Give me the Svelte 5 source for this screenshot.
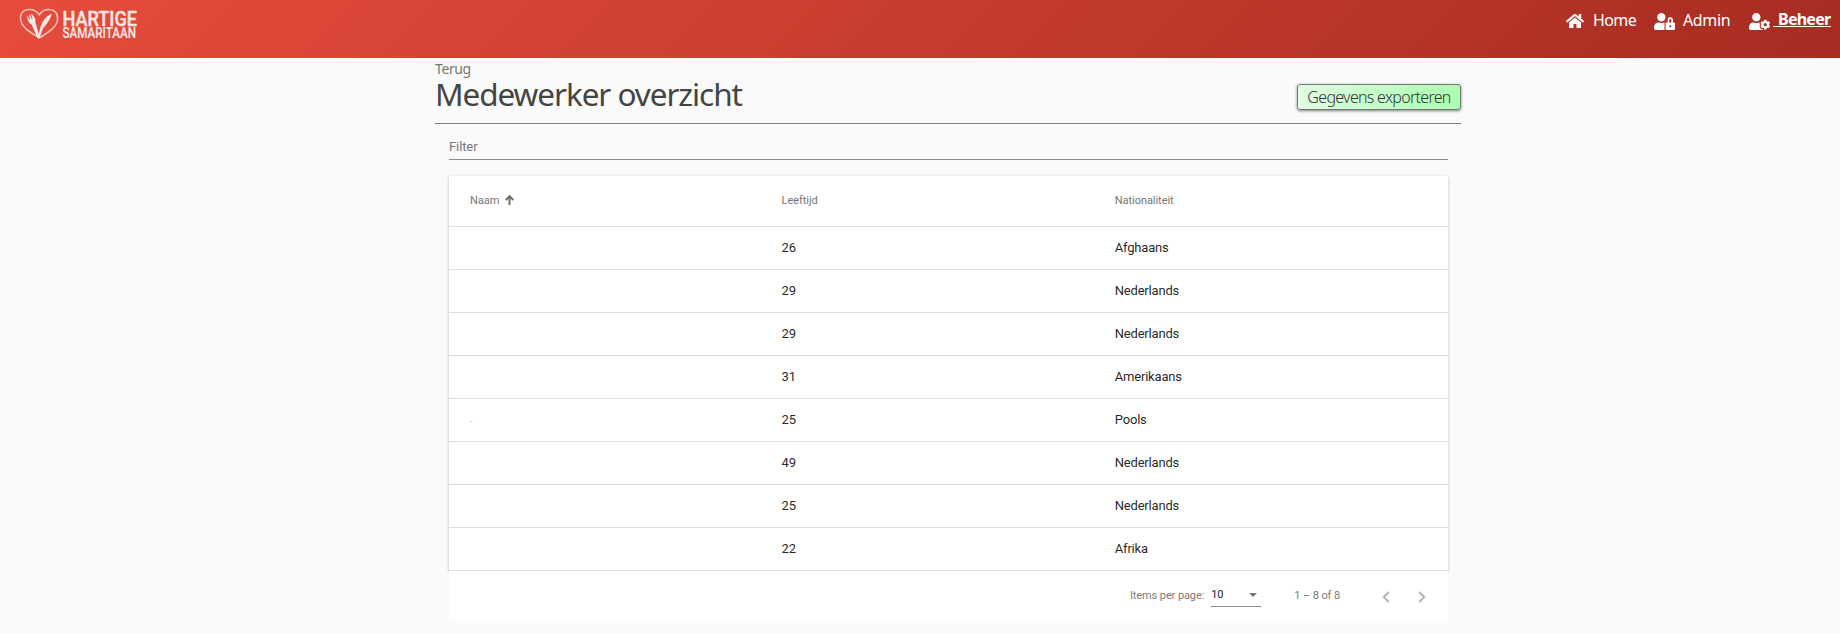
<script>
  const nav = [
    { label: 'Home', cls: 'home', box: '0 0 576 512', w: 18,
      d: 'M280.37 148.26L96 300.11V464a16 16 0 0 0 16 16l112.06-.29a16 16 0 0 0 15.92-16V368a16 16 0 0 1 16-16h64a16 16 0 0 1 16 16v95.64a16 16 0 0 0 16 16.05L464 480a16 16 0 0 0 16-16V300L295.67 148.26a12.19 12.19 0 0 0-15.3 0zM571.6 251.47L488 182.56V44.05a12 12 0 0 0-12-12h-56a12 12 0 0 0-12 12v72.61L318.47 43a48 48 0 0 0-61 0L4.34 251.47a12 12 0 0 0-1.6 16.9l25.5 31A12 12 0 0 0 45.15 301l235.22-193.74a12.19 12.19 0 0 1 15.3 0L530.9 301a12 12 0 0 0 16.9-1.6l25.5-31a12 12 0 0 0-1.7-16.93z' },
    { label: 'Admin', cls: 'admin', box: '0 0 640 512', w: 20,
      d: 'M224 256A128 128 0 1 0 96 128a128 128 0 0 0 128 128zm96 64a63.08 63.08 0 0 1 8.1-30.5c-4.8-.5-9.5-1.5-14.5-1.5h-16.7a174.08 174.08 0 0 1-145.8 0h-16.7A134.43 134.43 0 0 0 0 422.4V464a48 48 0 0 0 48 48h280.9a63.54 63.54 0 0 1-8.9-32zm288-32h-32v-80a80 80 0 0 0-160 0v80h-32a32 32 0 0 0-32 32v160a32 32 0 0 0 32 32h224a32 32 0 0 0 32-32V320a32 32 0 0 0-32-32zM496 432a32 32 0 1 1 32-32 32 32 0 0 1-32 32zm32-144h-64v-80a32 32 0 0 1 64 0z' },
    { label: 'Beheer', cls: 'beheer', box: '0 0 640 512', w: 20,
      d: 'M610.5 373.3c2.6-14.1 2.6-28.5 0-42.6l25.8-14.9c3-1.7 4.3-5.2 3.3-8.5-6.7-21.6-18.2-41.2-33.2-57.4-2.3-2.5-6-3.1-9-1.4l-25.8 14.9c-10.9-9.3-23.4-16.5-36.9-21.3v-29.8c0-3.4-2.4-6.4-5.7-7.1-22.3-5-45-4.8-66.2 0-3.3.7-5.7 3.7-5.7 7.1v29.8c-13.5 4.8-26 12-36.9 21.3l-25.8-14.9c-2.9-1.7-6.7-1.1-9 1.4-15 16.2-26.5 35.8-33.2 57.4-1 3.3.4 6.8 3.3 8.5l25.8 14.9c-2.6 14.1-2.6 28.5 0 42.6l-25.8 14.9c-3 1.7-4.3 5.2-3.3 8.5 6.7 21.6 18.2 41.1 33.2 57.4 2.3 2.5 6 3.1 9 1.4l25.8-14.9c10.9 9.3 23.4 16.5 36.9 21.3v29.8c0 3.4 2.4 6.4 5.7 7.1 22.3 5 45 4.8 66.2 0 3.3-.7 5.7-3.7 5.7-7.1v-29.8c13.5-4.8 26-12 36.9-21.3l25.8 14.9c2.9 1.7 6.7 1.1 9-1.4 15-16.2 26.5-35.8 33.2-57.4 1-3.3-.4-6.8-3.3-8.5l-25.8-14.9zM496 400.5c-26.8 0-48.5-21.8-48.5-48.5s21.8-48.5 48.5-48.5 48.5 21.8 48.5 48.5-21.7 48.5-48.5 48.5zM224 256c70.7 0 128-57.3 128-128S294.7 0 224 0 96 57.3 96 128s57.3 128 128 128zm201.2 226.5c-2.3-1.2-4.6-2.6-6.8-3.9l-7.9 4.6c-6 3.4-12.8 5.3-19.6 5.3-10.9 0-21.4-4.6-28.9-12.6-18.3-19.8-32.3-43.9-40.2-69.6-5.5-17.7 1.9-36.4 17.9-45.7l7.9-4.6c-.1-2.6-.1-5.2 0-7.8l-7.9-4.6c-16-9.2-23.4-28-17.9-45.7.9-2.9 2.2-5.8 3.2-8.7-3.8-.3-7.5-1.2-11.4-1.2h-16.7c-22.2 10.2-46.9 16-72.9 16s-50.6-5.8-72.9-16h-16.7C60.2 288 0 348.2 0 422.4V464c0 26.5 21.5 48 48 48h352c10.1 0 19.5-3.2 27.2-8.5-1.2-3.8-2-7.7-2-11.8v-9.2z' }
  ];
  const rows = [
    ['', '26', 'Afghaans'],
    ['', '29', 'Nederlands'],
    ['', '29', 'Nederlands'],
    ['', '31', 'Amerikaans'],
    ['.', '25', 'Pools'],
    ['', '49', 'Nederlands'],
    ['', '25', 'Nederlands'],
    ['', '22', 'Afrika']
  ];
</script>

<header>
  <svg class="logo" width="122" height="38" viewBox="0 0 122 38">
    <path class="heart" d="M20.500 31C15 27 3 22 1.600 12.500C.8 6 5 2.500 10 2.500c4.500 0 8.500 2.300 10.300 5.300C22 4.800 26 2.500 30 2.500c5 0 9.200 3.500 8.600 10C37.500 22 25.500 27 20.500 31z" />
    <path class="fill" d="M16.300 15.300l4.300 14.500c.4 1.400-1.700 2.200-2.300.8L12.500 17.500c-2-.6-3.700-3.500-4.600-8.300l.9-.4 1.700 4 .7-.3-1.200-4.600.8-.3 2 4.500.7-.3-1.400-4.700.8-.3c2.800 3.400 4.400 6.200 3.400 8.500z" />
    <path class="fill" d="M18.800 30.500l2.700-10.500c1.500-5.500 5.800-10.700 9.800-12.800c1.200-.4 1.600.6 1 1.500c-1.700 4-4.800 9-8.300 12.500l-3.500 9.800z" />
    <text class="word" x="43.500" y="18.800" font-size="21" textLength="74.500" lengthAdjust="spacingAndGlyphs">HARTIGE</text>
    <text class="word small" x="43.500" y="30.900" font-size="14" textLength="73.500" lengthAdjust="spacingAndGlyphs">SAMARITAAN</text>
  </svg>
  <nav>
    {#each nav as item}
      <a class={item.cls} href="#{item.cls}">
        <svg viewBox={item.box} width={item.w} height="16"><path d={item.d} /></svg><span>{item.label}</span>
      </a>
    {/each}
  </nav>
</header>

<main>
  <div class="top">
    <div>
      <div class="back">Terug</div>
      <h1>Medewerker overzicht</h1>
    </div>
    <button class="export">Gegevens exporteren</button>
  </div>

  <section>
    <div class="filter">Filter</div>
    <div class="table">
      <div class="row head">
        <div>Naam
          <svg width="9" height="10" viewBox="0 0 9 10"><path d="M4.500 10V1.500M.7 5L4.500 1.200L8.300 5" /></svg>
        </div>
        <div>Leeftijd</div>
        <div>Nationaliteit</div>
      </div>
      {#each rows as row}
        <div class="row">
          {#each row as cell}
            <div class:dot={cell === '.'}>{cell}</div>
          {/each}
        </div>
      {/each}
    </div>
    <div class="paginator">
      <span class="per">Items per page:</span>
      <div class="select"><span>10</span><i></i></div>
      <span class="range">1 – 8 of 8</span>
      <svg class="prev" width="8" height="12" viewBox="0 0 8 12"><path d="M6.800 1L1.800 6l5 5" /></svg>
      <svg width="8" height="12" viewBox="0 0 8 12"><path d="M1.200 1l5 5l-5 5" /></svg>
    </div>
  </section>
</main>

<style>
  :global(body) { background: #fafafa; overflow: hidden; }
  header {
    box-sizing: border-box;
    height: 58px;
    padding: 7px 9px 0 19px;
    display: flex;
    justify-content: space-between;
    align-items: flex-start;
    background: linear-gradient(135deg, #e74c3c, #a62c21);
    font-family: "Noto Sans", "Open Sans", sans-serif;
  }
  .logo { overflow: visible; }
  .heart { fill: none; stroke: #f6c3bd; stroke-width: 1.500; }
  .fill { fill: #f3e8e6; }
  .word { fill: #f8e4e1; stroke: #f8e4e1; stroke-width: .5; stroke-linejoin: round; font-family: Roboto, sans-serif; font-weight: 500; }
  .small { stroke-width: .2; }
  nav { display: flex; }
  nav a { display: flex; color: #fff; font-size: 16px; line-height: 24px; text-decoration: none; }
  nav svg { fill: #fff; display: block; margin-top: 6px; }
  .admin svg, .beheer svg { width: 21px; height: 17px; margin-right: -1px; }
  nav span { display: block; height: 24px; padding-top: 1px; white-space: pre; }
  .home span { margin-left: 9px; width: 61px; letter-spacing: -.6px; }
  .admin span { margin-left: 9px; width: 66px; letter-spacing: -.35px; }
  .beheer span {
    box-sizing: border-box;
    width: 58px;
    height: 20px;
    margin-left: 4px;
    padding: 0 0 0 5px;
    border-bottom: 1px solid #fff;
    font-weight: 700;
    letter-spacing: -.75px;
  }
  main { width: 1026px; margin: 0 0 0 435px; color: #444; }
  .top {
    box-sizing: border-box;
    height: 66px;
    display: flex;
    justify-content: space-between;
    border-bottom: 1px solid #808080;
    font-family: "Noto Sans", "Open Sans", sans-serif;
  }
  .back { padding-top: 1px; font-size: 14px; line-height: 19px; letter-spacing: -.4px; color: #777; }
  h1 { margin: 0; font-size: 31.500px; line-height: 32px; font-weight: 400; letter-spacing: -1.070px; white-space: nowrap; }
  .export {
    box-sizing: border-box;
    width: 164px;
    height: 26px;
    margin-top: 26px;
    padding: 0;
    border: 1px solid #777;
    border-radius: 3px;
    background: linear-gradient(90deg, #e0fde1, #aaffb0);
    box-shadow: 0 1px 3px rgba(0, 0, 0, .5);
    color: #333;
    font: 350 16px/24px "Noto Sans", "Open Sans", sans-serif;
    letter-spacing: -.7px;
    white-space: nowrap;
  }
  section { width: 999px; margin-left: 14px; font-family: Roboto, sans-serif; }
  .filter {
    box-sizing: border-box;
    height: 36px;
    padding-top: 14px;
    margin-bottom: 16px;
    border-bottom: 1px solid #8c8c8c;
    font-size: 13px;
    line-height: 17px;
    letter-spacing: -.1px;
    color: #777;
  }
  .table { background: #fff; box-shadow: 0 1px 3px rgba(0, 0, 0, .25); }
  .row {
    box-sizing: border-box;
    height: 43px;
    padding-bottom: 2px;
    display: grid;
    grid-template-columns: 332.600px 333.200px 333.200px;
    align-items: center;
    border-bottom: 1px solid #e0e0e0;
    font-size: 13px;
    letter-spacing: -.2px;
    color: rgba(0, 0, 0, .87);
  }
  .row > div:first-child { padding-left: 21px; }
  .head { height: 51px; font-size: 11px; letter-spacing: -.05px; color: #757575; }
  .head svg { margin-left: 3px; vertical-align: -1px; fill: none; stroke: #6f6f6f; stroke-width: 2; }
  .row .dot { font-size: 9px; color: #b87820; }
  .paginator {
    box-sizing: border-box;
    height: 50px;
    padding: 0 22px 2px 0;
    display: flex;
    align-items: center;
    justify-content: flex-end;
    background: #fff;
    font-size: 11px;
    letter-spacing: -.1px;
    color: #7b7b7b;
  }
  .select {
    box-sizing: border-box;
    width: 50px;
    height: 24px;
    margin: 0 33px 0 7px;
    padding: 0 4px 0 0;
    display: flex;
    align-items: center;
    justify-content: space-between;
    border-bottom: 1px solid #8c8c8c;
    color: #222;
  }
  .select i { border: 4.500px solid transparent; border-top-color: #757575; border-bottom: 0; }
  .paginator svg { fill: none; stroke: #b5b5b5; stroke-width: 2; margin-top: 3px; }
  .prev { margin: 0 28px 0 42px; }
</style>
